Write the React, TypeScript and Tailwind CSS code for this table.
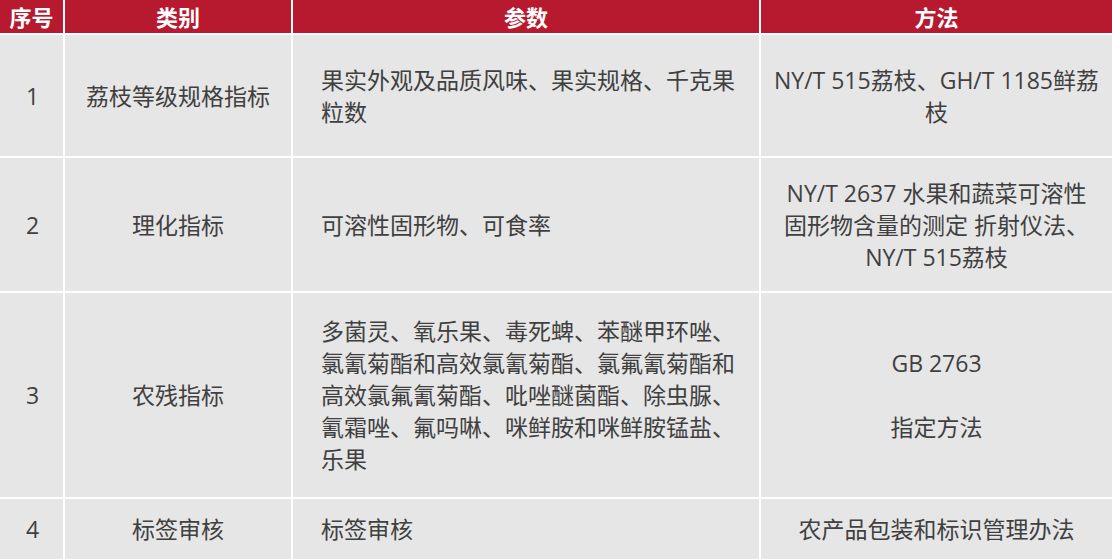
import React from "react";

const cell = "bg-[#e6e6e6] flex items-center text-[#404040]";

const rows = [
  {
    no: "1",
    cat: "荔枝等级规格指标",
    params: ["果实外观及品质风味、果实规格、千克果", "粒数"],
    method: ["NY/T 515荔枝、GH/T 1185鲜荔", "枝"],
    h: "h-[121px]",
  },
  {
    no: "2",
    cat: "理化指标",
    params: ["可溶性固形物、可食率"],
    method: ["NY/T 2637 水果和蔬菜可溶性", "固形物含量的测定 折射仪法、", "NY/T 515荔枝"],
    h: "h-[133px]",
  },
  {
    no: "3",
    cat: "农残指标",
    params: [
      "多菌灵、氧乐果、毒死蜱、苯醚甲环唑、",
      "氯氰菊酯和高效氯氰菊酯、氯氟氰菊酯和",
      "高效氯氟氰菊酯、吡唑醚菌酯、除虫脲、",
      "氰霜唑、氟吗啉、咪鲜胺和咪鲜胺锰盐、",
      "乐果",
    ],
    method: ["GB 2763", "\u00a0", "指定方法"],
    h: "h-[204px]",
  },
  {
    no: "4",
    cat: "标签审核",
    params: ["标签审核"],
    method: ["农产品包装和标识管理办法"],
    h: "h-[60px]",
  },
];

export default function App() {
  return (
    <div
      className="w-[1112px] h-[559px] overflow-hidden bg-white text-[23px] leading-[32px]"
      style={{ fontFamily: '"Open Sans", "Noto Sans CJK SC", sans-serif' }}
    >
      <div className="grid grid-cols-[63px_226px_466px_351px] gap-[2px]">
        {["序号", "类别", "参数", "方法"].map((t) => (
          <div
            key={t}
            className="h-[33px] bg-[#b71a2f] text-white text-[22px] font-bold flex items-center justify-center"
          >
            {t}
          </div>
        ))}
        {rows.map((r) => (
          <React.Fragment key={r.no}>
            <div className={`${cell} ${r.h} justify-center pl-[2px]`}>{r.no}</div>
            <div className={`${cell} ${r.h} justify-center`}>{r.cat}</div>
            <div className={`${cell} ${r.h} pl-[28px]`}>
              <div>
                {r.params.map((l, i) => (
                  <div key={i} className="whitespace-nowrap">{l}</div>
                ))}
              </div>
            </div>
            <div className={`${cell} ${r.h} justify-center text-center`}>
              <div>
                {r.method.map((l, i) => (
                  <div key={i} className="whitespace-nowrap">{l}</div>
                ))}
              </div>
            </div>
          </React.Fragment>
        ))}
      </div>
    </div>
  );
}
